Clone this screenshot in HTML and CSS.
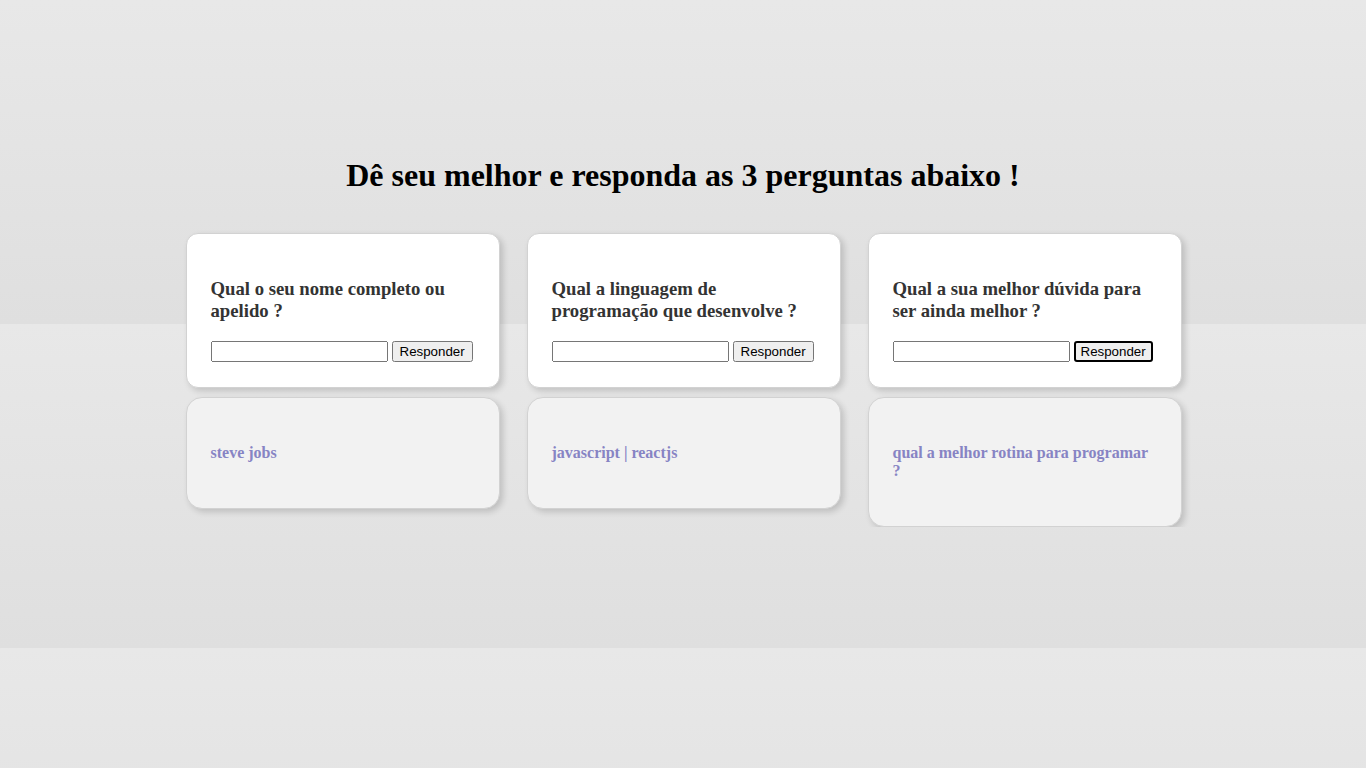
FILE: index.html
```html
<!DOCTYPE html>
<html lang="pt-BR">
<head>
<meta charset="utf-8">
<title>Perguntas</title>
<link rel="stylesheet" href="styles.css">
</head>
<body>
<main class="page">
  <h1 class="title">Dê seu melhor e responda as 3 perguntas abaixo !</h1>
  <section class="grid">
    <div class="col">
      <div class="card">
        <h3 class="question">Qual o seu nome completo ou apelido ?</h3>
        <div class="form"><input type="text" class="field"> <button class="btn">Responder</button></div>
      </div>
      <div class="answer"><h4 class="answer-text">steve jobs</h4></div>
    </div>
    <div class="col">
      <div class="card">
        <h3 class="question">Qual a linguagem de programação que desenvolve ?</h3>
        <div class="form"><input type="text" class="field"> <button class="btn">Responder</button></div>
      </div>
      <div class="answer"><h4 class="answer-text">javascript | reactjs</h4></div>
    </div>
    <div class="col">
      <div class="card">
        <h3 class="question">Qual a sua melhor dúvida para ser ainda melhor ?</h3>
        <div class="form"><input type="text" class="field"> <button class="btn btn-focus">Responder</button></div>
      </div>
      <div class="answer"><h4 class="answer-text">qual a melhor rotina para programar ?</h4></div>
    </div>
  </section>
</main>
</body>
</html>
```
FILE: styles.css
```css
html {
  background: linear-gradient(#e8e8e8, #dfdfdf) repeat-y;
  background-size: 100% 324px;
  background-color: #e8e8e8;
  min-height: 100%;
}
body {
  margin: 0;
  font-family: "Liberation Serif", "Times New Roman", serif;
}
.page {
  padding-top: 136px;
}
.title {
  font-size: 32px;
  font-weight: bold;
  text-align: center;
  color: #000;
  margin: 21.44px 0 38.5px;
}
.grid {
  display: grid;
  grid-template-columns: repeat(3, 314px);
  column-gap: 27px;
  justify-content: center;
  align-items: start;
  padding-left: 1px;
}
.col {
  display: flex;
  flex-direction: column;
  gap: 9px;
}
.card,
.answer {
  border: 1px solid #d2d2d2;
  border-radius: 12px;
  padding: 0 24px;
  box-shadow: 3px 3px 6px rgba(0, 0, 0, 0.16);
}
.card {
  background: #fff;
  padding-top: 25px;
  padding-bottom: 25px;
}
.answer {
  background: #f2f2f2;
  border-radius: 16px;
  padding-top: 24px;
  padding-bottom: 25px;
}
.question {
  font-size: 18.72px;
  font-weight: bold;
  color: #333;
  margin: 18.72px 0;
}
.form {
  display: flex;
  align-items: center;
  gap: 4px;
  height: 22px;
}
.field {
  width: 177px;
  height: 21px;
  box-sizing: border-box;
}
.btn {
  height: 21px;
  box-sizing: border-box;
  font-size: 13.33px;
}
.btn-focus {
  border: 2px solid #000;
  border-radius: 3px;
  padding: 0 5px;
}
.answer-text {
  font-size: 16px;
  font-weight: bold;
  color: #8784c4;
  margin: 21.28px 0;
}
```
